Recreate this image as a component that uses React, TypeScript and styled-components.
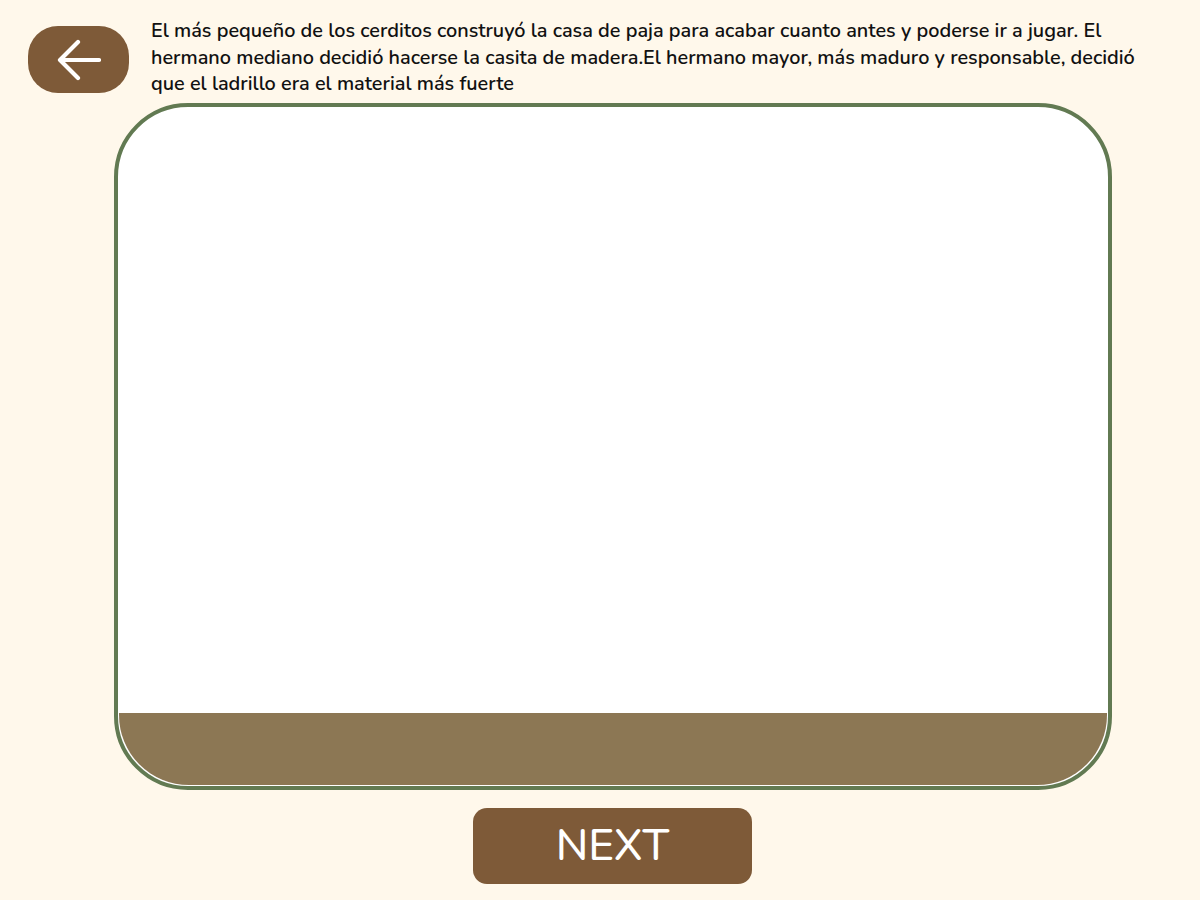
import React from "react";
import styled, { createGlobalStyle } from "styled-components";

const Global = createGlobalStyle`
  html, body { margin: 0; padding: 0; background: #fff8eb; }
  body { font-family: "Nunito", "Open Sans", "Noto Sans", sans-serif; }
`;

const Page = styled.div`
  width: 1200px;
  height: 900px;
  background: #fff8eb;
  display: flex;
  flex-direction: column;
  box-sizing: border-box;
`;

const Header = styled.div`
  display: flex;
  align-items: flex-start;
  height: 103px;
`;

const BackButton = styled.button`
  margin: 26px 0 0 28px;
  width: 101px;
  height: 67px;
  border: none;
  border-radius: 30px;
  background: #7e5a38;
  display: flex;
  align-items: center;
  justify-content: center;
  padding: 0;
  cursor: pointer;
  flex-shrink: 0;
`;

const Story = styled.p`
  margin: 18px 0 0 22px;
  width: 998px;
  font-size: 19.85px;
  font-weight: 600;
  line-height: 26.5px;
  color: #111111;
`;

const Card = styled.div`
  margin-left: 114px;
  width: 998px;
  height: 687px;
  box-sizing: border-box;
  border: 4px solid #627a52;
  border-radius: 74px;
  background: #ffffff;
  overflow: hidden;
  display: flex;
  flex-direction: column;
`;

const Canvas = styled.div`
  flex: 1;
`;

const Ground = styled.div`
  height: 72px;
  margin: 0 1px 1px;
  background: #8c7754;
  border-radius: 0 0 70px 70px;
`;

const Footer = styled.div`
  display: flex;
  padding-top: 18px;
`;

const NextButton = styled.button`
  margin-left: 473px;
  width: 279px;
  height: 76px;
  border: none;
  border-radius: 14px;
  background: #7e5a38;
  color: #ffffff;
  font-family: "Nunito", "Open Sans", "Noto Sans", sans-serif;
  font-size: 44px;
  font-weight: 500;
  display: flex;
  align-items: center;
  justify-content: center;
  padding: 0;
  cursor: pointer;
`;

export default function App() {
  return (
    <>
      <Global />
      <Page>
        <Header>
          <BackButton aria-label="back">
            <svg width="44" height="42" viewBox="0 0 44 42" fill="none">
              <path
                d="M42 21H4M21 3L3 21l18 18"
                stroke="#ffffff"
                strokeWidth="4.2"
                strokeLinecap="round"
                strokeLinejoin="round"
              />
            </svg>
          </BackButton>
          <Story>
            El más pequeño de los cerditos construyó la casa de paja para acabar cuanto antes y poderse ir a jugar. El hermano mediano decidió hacerse la casita de madera.El hermano mayor, más maduro y responsable, decidió que el ladrillo era el material más fuerte
          </Story>
        </Header>
        <Card>
          <Canvas />
          <Ground />
        </Card>
        <Footer>
          <NextButton>NEXT</NextButton>
        </Footer>
      </Page>
    </>
  );
}
